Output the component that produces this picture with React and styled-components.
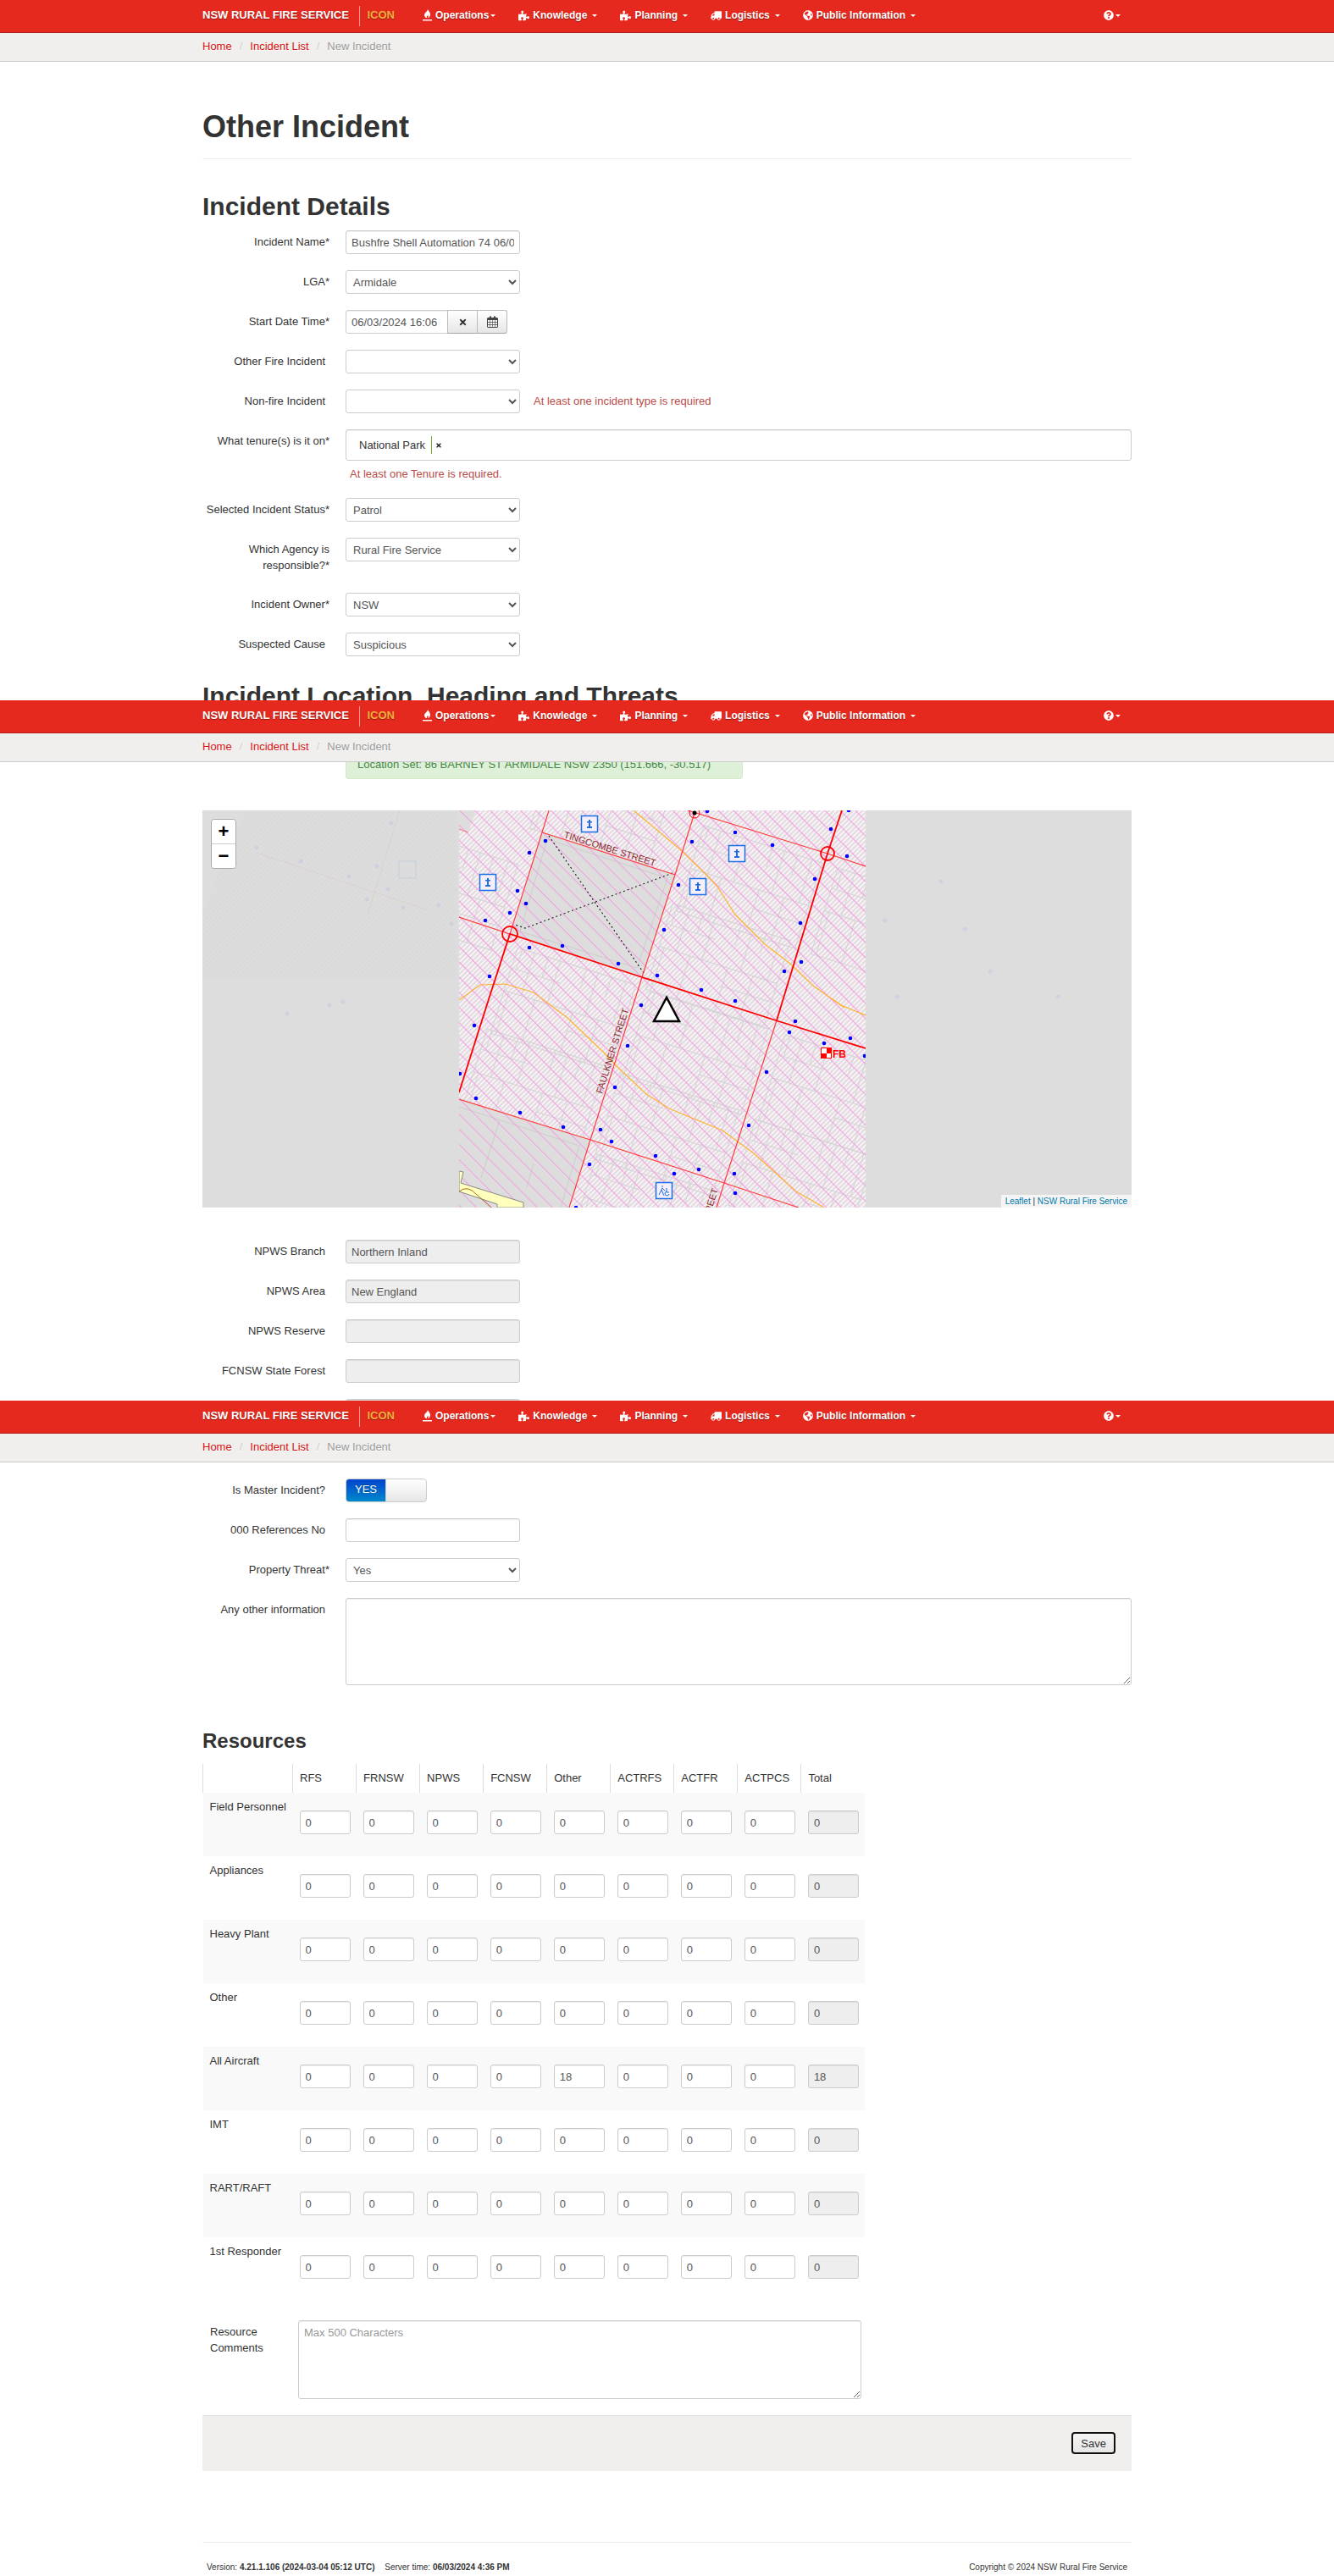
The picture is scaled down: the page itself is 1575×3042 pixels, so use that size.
import React from "react";
import styled, { createGlobalStyle, css } from "styled-components";
import { FaPuzzlePiece, FaTruck, FaGlobeAmericas, FaQuestionCircle, FaTimes } from "react-icons/fa";

const GlobalStyle = createGlobalStyle`
  *, *::before, *::after { box-sizing: border-box; }
  body {
    margin: 0;
    background: #fff;
    color: #333;
    font-family: "Liberation Sans", Arial, Helvetica, sans-serif;
    font-size: 13px;
    line-height: 19px;
  }
  input, select, textarea, button { font: inherit; margin: 0; }
`;

/* ---------- Shared layout ---------- */

const Container = styled.div`
  max-width: 1097px;
  margin: 0 auto;
`;

/* ---------- Header ---------- */

const NavBar = styled.nav`
  background: #e6291e;
  border-bottom: 1px solid #b01f17;
  color: #fff;
  font-weight: bold;
  text-shadow: 0 1px 1px rgba(0, 0, 0, 0.4);
`;

const NavInner = styled(Container)`
  display: flex;
  align-items: center;
  height: 38px;
  padding-right: 13px;
`;

const Brand = styled.a`
  display: flex;
  align-items: center;
  color: #fff;
  text-decoration: none;
  font-size: 13px;
  width: 227px;
  margin-right: 33px;
  white-space: nowrap;
`;

const BrandName = styled.span`
  padding-bottom: 2px;
  line-height: 22px;
`;

const BrandApp = styled(BrandName)`
  margin-left: auto;
  padding-left: 9px;
  border-left: 1px solid #f39b95;
  color: #f6b03c;
`;

const Menu = styled.ul`
  display: flex;
  flex: 1;
  align-items: center;
  gap: 27px;
  list-style: none;
  margin: 0;
  padding: 0 0 2px;
`;

const MenuItem = styled.li`
  ${(p) => p.$end && css`margin-left: auto;`}
`;

const MenuLink = styled.a`
  display: flex;
  align-items: center;
  gap: 4px;
  color: #fff;
  text-decoration: none;
  font-size: 12px;
  white-space: nowrap;
`;

const Caret = styled.span`
  border: 3px solid transparent;
  border-top-color: #fff;
  border-bottom: 0;
  margin-left: ${(p) => (p.$tight ? "-2px" : "2px")};
`;

const CrumbBar = styled.div`
  background: #f0efed;
  border-bottom: 1px solid #ccc;
`;

const Crumbs = styled.ol`
  display: flex;
  list-style: none;
  margin: 0;
  padding: 6px 0 8px;
  color: #999;
  text-shadow: 0 1px 0 #fff;
  li + li::before {
    content: "/";
    padding: 0 9px;
    color: #ccc;
  }
  a {
    color: #d40f0f;
    text-decoration: none;
  }
`;

const FireIcon = () => (
  <svg width="11" height="14" viewBox="0 0 11 14" fill="#fff" aria-hidden="true">
    <path d="M6 0c.4 1.7 3 3 3 6 0 2.300-1.200 3.800-3 4.300.9-1 1-2.200.2-3.300-.3.800-.8 1.100-1.400 1.300.2.800-.1 1.500.3 2C3.200 9.900 2 8.600 2 6.800 2 4.200 5.600 3 6 0z" />
    <path d="M0 12h11v1.500H0z" />
  </svg>
);

const menu = [
  { name: "Operations", icon: <FireIcon />, tight: true },
  { name: "Knowledge", icon: <FaPuzzlePiece size={13} /> },
  { name: "Planning", icon: <FaPuzzlePiece size={13} /> },
  { name: "Logistics", icon: <FaTruck size={13} style={{ transform: "scaleX(-1)" }} /> },
  { name: "Public Information", icon: <FaGlobeAmericas size={12} /> },
];

function Header() {
  return (
    <header>
      <NavBar>
        <NavInner>
          <Brand href="#home">
            <BrandName>NSW RURAL FIRE SERVICE</BrandName>
            <BrandApp>ICON</BrandApp>
          </Brand>
          <Menu>
            {menu.map((m) => (
              <MenuItem key={m.name}>
                <MenuLink href="#menu">
                  {m.icon}
                  {m.name}
                  <Caret $tight={m.tight} />
                </MenuLink>
              </MenuItem>
            ))}
            <MenuItem $end>
              <MenuLink href="#help" aria-label="Help">
                <FaQuestionCircle size={12} />
                <Caret $tight />
              </MenuLink>
            </MenuItem>
          </Menu>
        </NavInner>
      </NavBar>
      <CrumbBar>
        <Container>
          <Crumbs>
            <li><a href="#home">Home</a></li>
            <li><a href="#list">Incident List</a></li>
            <li>New Incident</li>
          </Crumbs>
        </Container>
      </CrumbBar>
    </header>
  );
}

/* ---------- Headings ---------- */

const PageTitle = styled.h1`
  margin: 57px 0 36px;
  padding-bottom: 17px;
  border-bottom: 1px solid #eee;
  font-size: 36px;
  line-height: 40px;
`;

const SectionTitle = styled.h2`
  margin: 0 0 8px;
  font-size: 30px;
  line-height: 40px;
`;

const SubTitle = styled.h3`
  margin: 46px 0 7px;
  font-size: 24px;
  line-height: 40px;
`;

const Cut = styled.div`
  overflow: hidden;
  height: ${(p) => p.$height}px;
  margin-top: ${(p) => p.$top || 0}px;
  ${(p) => p.$bottom && css`
    display: flex;
    align-items: flex-end;
  `}
`;

/* ---------- Form parts ---------- */

const FormRow = styled.div`
  display: grid;
  grid-template-columns: 150px minmax(0, 1fr);
  column-gap: 19px;
  align-items: start;
  margin-bottom: ${(p) => (p.$last ? 0 : 19)}px;
`;

const FormStart = styled.div`
  padding-top: 19px;
`;

const RowLabel = styled.label`
  display: block;
  min-height: 28px;
  padding: 4px ${(p) => (p.$required ? 0 : 5)}px 4px 0;
  text-align: right;
`;

const Controls = styled.div`
  display: flex;
  gap: 16px;
  flex-wrap: wrap;
`;

const field = css`
  border: 1px solid #ccc;
  border-radius: 3px;
  background: #fff;
  color: #555;
`;

const TextInput = styled.input`
  ${field}
  width: 206px;
  height: 28px;
  padding: 4px 6px;
  box-shadow: inset 0 1px 1px rgba(0, 0, 0, 0.075);
  &:disabled {
    background: #eee;
    color: #555;
  }
`;

const Select = styled.select`
  ${field}
  width: 206px;
  height: 28px;
  padding: 4px;
`;

const TextArea = styled.textarea`
  ${field}
  display: block;
  width: 100%;
  height: ${(p) => p.$height}px;
  padding: 4px 6px;
  box-shadow: inset 0 1px 1px rgba(0, 0, 0, 0.075);
  &::placeholder { color: #999; }
`;

const Message = styled.span`
  color: #b94a48;
  padding: ${(p) => (p.$below ? "6px 5px 0" : "4px 0")};
`;

const DateGroup = styled.div`
  display: flex;
  ${TextInput} {
    width: 121px;
    border-radius: 3px 0 0 3px;
  }
`;

const AddOn = styled.button`
  display: flex;
  align-items: center;
  justify-content: center;
  width: 36px;
  height: 28px;
  margin-left: -1px;
  padding: 0;
  border: 1px solid #bbb;
  border-bottom-color: #a2a2a2;
  background: linear-gradient(#fff, #e6e6e6);
  color: #333;
  &:last-child { border-radius: 0 3px 3px 0; }
`;

const TagBox = styled.div`
  ${field}
  display: flex;
  align-items: center;
  width: 100%;
  height: 37px;
  padding: 0 15px;
  color: #333;
  box-shadow: inset 0 1px 1px rgba(0, 0, 0, 0.075);
`;

const TagRemove = styled.button`
  display: flex;
  align-items: center;
  height: 21px;
  margin-left: 7px;
  padding: 0 0 0 4px;
  border: 0;
  border-left: 1px solid #6fae2c;
  background: none;
  color: #222;
`;

const Switch = styled.div`
  position: relative;
  display: flex;
  width: 96px;
  height: 28px;
  border: 1px solid #ccc;
  border-radius: 4px;
  overflow: hidden;
  background: linear-gradient(#fff, #e6e6e6);
  input {
    position: absolute;
    inset: 0;
    width: 100%;
    height: 100%;
    opacity: 0;
  }
`;

const SwitchOn = styled.span`
  width: 47px;
  padding-top: 2px;
  border-right: 1px solid #ccc;
  background: linear-gradient(#0044cc, #0088cc);
  color: #fff;
  text-align: center;
  text-shadow: 0 -1px 0 rgba(0, 0, 0, 0.25);
`;

const Alert = styled.div`
  width: 469px;
  margin-left: 169px;
  padding: 7px 13px;
  border: 1px solid #d6e9c6;
  border-radius: 3px;
  background: #dff0d8;
  color: #468847;
`;

const CalendarIcon = () => (
  <svg width="13" height="14" viewBox="0 0 13 14" aria-hidden="true">
    <path fill="#444" d="M1 2h2V.7C3 0 5 0 5 .7V2h3V.7C8 0 10 0 10 .7V2h2l1 1v10l-1 1H1l-1-1V3z" />
    <path fill="#fafafa" d="M1 5h2.300v2H1zM3.900 5h2.300v2H3.900zM6.800 5h2.300v2H6.800zM9.700 5H12v2H9.700zM1 7.700h2.300v2.300H1zM3.900 7.700h2.300v2.300H3.900zM6.800 7.700h2.300v2.300H6.800zM9.700 7.700H12v2.300H9.700zM1 10.700h2.300V13H1zM3.900 10.700h2.300V13H3.900zM6.800 10.700h2.300V13H6.800zM9.700 10.700H12V13H9.700z" />
  </svg>
);

function Row({ id, label, required, last, children }) {
  return (
    <FormRow $last={last}>
      <RowLabel htmlFor={id} $required={required}>
        {label}
        {required && "*"}
      </RowLabel>
      <Controls>{children}</Controls>
    </FormRow>
  );
}

function SelectRow({ id, label, required, value, last, children }) {
  return (
    <Row id={id} label={label} required={required} last={last}>
      <Select id={id} defaultValue={value}>
        <option>{value}</option>
      </Select>
      {children}
    </Row>
  );
}

/* ---------- Map ---------- */

const MapFrame = styled.div`
  position: relative;
  height: 469px;
  margin: 37px 0 38px;
  background: #ddd;
  overflow: hidden;
  svg { display: block; }
`;

const ZoomControl = styled.div`
  position: absolute;
  top: 10px;
  left: 10px;
  width: 30px;
  border: 1px solid #aaa;
  border-radius: 4px;
  overflow: hidden;
`;

const ZoomButton = styled.button`
  display: block;
  width: 28px;
  height: 28px;
  padding: 0;
  border: 0;
  background: #fff;
  color: #000;
  font-size: 22px;
  font-weight: bold;
  line-height: 28px;
  & + & {
    height: 29px;
    border-top: 1px solid #ccc;
  }
`;

const Attribution = styled.div`
  position: absolute;
  right: 0;
  bottom: 0;
  padding: 0 5px;
  background: rgba(255, 255, 255, 0.7);
  font-size: 10px;
  line-height: 15px;
  a {
    color: #0078a8;
    text-decoration: none;
  }
`;

const hydrants = [
  [102, 36], [83, 50], [69, 95], [79, 110], [60, 121], [31, 130], [83, 162], [122, 160], [188, 181], [36, 196],
  [234, 195], [286, 212], [326, 225], [215, 230], [242, 141], [259, 88], [275, 37], [293, 1], [326, 26], [370, 41],
  [439, 22], [458, 54], [460, 0], [420, 81], [403, 133], [404, 179], [384, 190], [18, 254], [1, 311], [20, 340],
  [72, 357], [123, 374], [167, 377], [180, 391], [154, 418], [232, 408], [283, 424], [254, 429], [325, 429],
  [326, 452], [342, 372], [363, 309], [390, 262], [397, 249], [431, 275], [462, 269], [479, 290], [199, 278],
  [184, 327], [138, 469],
];

const faintDots = [
  [223, 15], [64, 44], [116, 60], [206, 66], [173, 78], [219, 93], [194, 105], [237, 115], [279, 112], [294, 134],
  [150, 230], [166, 226], [100, 240], [806, 130], [872, 84], [900, 140], [930, 190], [1010, 220], [820, 220],
];

const monuments = [[154, 16], [34, 85], [328, 51], [282, 90]];

const lotOffsets = [14, 29, 46, 61, 93, 108, 124, 142];

function Lots({ x, y }) {
  return (
    <g transform={`translate(${x} ${y}) rotate(17.5)`} fill="none" stroke="#d3d3d6" strokeWidth="1">
      <path d="M8 8h146v106H8zM8 61h146M8 33h60M92 84h62" />
      {lotOffsets.map((o, i) => (
        <path key={o} d={i % 2 ? `M${o} 8v53` : `M${o} 61v53M${o} 8v25`} />
      ))}
    </g>
  );
}

function MapDrawing() {
  return (
    <svg width="100%" height="469" viewBox="0 0 1097 469" preserveAspectRatio="xMidYMid slice" role="img" aria-label="Incident map">
      <defs>
        <pattern id="hatch" width="4" height="4" patternUnits="userSpaceOnUse" patternTransform="rotate(45)">
          <rect width="4" height="4" fill="#fdf0f8" />
          <rect width="1.900" height="4" fill="#dcdcdc" />
        </pattern>
        <pattern id="pink" width="12.700" height="12.700" patternUnits="userSpaceOnUse" patternTransform="rotate(-45)">
          <rect width="0.900" height="12.700" fill="#f994e4" />
        </pattern>
        <pattern id="faint" width="4" height="4" patternUnits="userSpaceOnUse" patternTransform="rotate(45)">
          <rect width="2" height="4" fill="#dadada" />
        </pattern>
        <clipPath id="tile"><rect width="480" height="469" /></clipPath>
      </defs>

      <path fill="url(#faint)" d="M50 0h250v200H0V120z" />
      <g opacity="0.05">
        <path d="M64 50l203 68M233 0l-38 123" stroke="#f00" fill="none" />
        <rect x="232" y="60" width="20" height="20" fill="none" stroke="#06f" strokeWidth="2" />
        {faintDots.map(([x, y]) => <circle key={`${x}-${y}`} cx={x} cy={y} r="2.500" fill="#00f" />)}
      </g>

      <g transform="translate(303 0)" clipPath="url(#tile)">
        <rect width="480" height="469" fill="url(#hatch)" />
        <Lots x={110} y={-90} />
        <Lots x={284} y={8} />
        <Lots x={442} y={58} />
        <Lots x={-75} y={10} />
        <Lots x={247} y={100} />
        <Lots x={64} y={152} />
        <Lots x={28} y={248} />
        <Lots x={220} y={204} />
        <Lots x={186} y={300} />
        <Lots x={380} y={255} />
        <Lots x={345} y={355} />
        <Lots x={158} y={396} />
        <g fill="#ddd">
          <path d="M98 26L255 76 216 197 61 146z" />
          <path d="M0 341L155 389 130 469H0z" />
          <path d="M0 0H20L11 26 0 22z" />
        </g>
        <path d="M104 34L246 80 210 186 72 143zM0 350L142 396 120 469M48 366L26 434M88 417L80 445" fill="none" stroke="#ccc" />
        <rect width="480" height="469" fill="url(#pink)" />
        <path d="M0 426L5 427 2 440 76 463V469H45V465L0 450z" fill="#ffffbe" stroke="#888" />
        <path d="M0 450Q10 442 20 453L38 469" fill="none" stroke="#a87020" />

        <g fill="none" stroke="#ffb32c" strokeWidth="1.200">
          <path d="M206 0L261 46 290 74 305 90 326 123 361 158 391 181 418 207 455 233" />
          <path d="M441 223L451 230 480 242" />
          <path d="M0 224L25 206 55 205 88 215 128 245 171 286 185 301 221 335 248 352 311 378 348 405 398 450 431 469" />
        </g>
        <g fill="none" stroke="#222" strokeWidth="1.200" strokeDasharray="2 3">
          <path d="M106 30L218 192" />
          <path d="M252 74L78 139 66 135" />
        </g>
        <g fill="none" stroke="#ff3c3c" strokeWidth="1.200">
          <path d="M0 126L60 146 98 26 106 0M98 26L255 76" />
          <path d="M278 3L255 76 216 197 155 389 130 469" />
          <path d="M270 0L435 51 480 66" />
          <path d="M375 248L313 440 304 469" />
          <path d="M0 341L155 389 313 440 401 469" />
          <path d="M0 22L11 26" opacity="0.5" />
        </g>
        <g fill="none" stroke="#f00" strokeWidth="1.800">
          <path d="M480 281L374 248 216 197 60 146 35 223 0 333" />
          <path d="M452 0L435 51 375 248" />
          <circle cx="60" cy="146" r="9" />
          <circle cx="435" cy="51" r="8" />
          <circle cx="278" cy="3" r="6" strokeWidth="1" />
        </g>
        <circle cx="278" cy="3" r="2.500" />
        {hydrants.map(([x, y]) => <circle key={`${x}-${y}`} cx={x} cy={y} r="2.300" fill="#00f" />)}

        {monuments.map(([x, y]) => (
          <g key={`${x}-${y}`} transform={`translate(${x} ${y})`}>
            <rect x="-9.500" y="-9.500" width="19" height="19" fill="#f6eef8" stroke="#1a6fe8" strokeWidth="1.500" />
            <path d="M-1-5h2v2h2v1.500H1V3h2v2h-6V3h2v-4.500h-2V-3h2z" fill="#1a6fe8" />
          </g>
        ))}
        <g transform="translate(242 449)" fill="none" stroke="#1a6fe8">
          <rect x="-9.500" y="-9.500" width="19" height="19" fill="#f6eef8" strokeWidth="1.500" />
          <path d="M-2-6v2M-2-3L-6 5M-3-1L0 6M-2-3L1 0M3-3v5h3M3 1a2.500 2.500 0 1 0 3 3" />
        </g>

        <path d="M245 221L230 249H260z" fill="#fff" stroke="#000" strokeWidth="2.500" />
        <g fill="#f00">
          <rect x="427.500" y="280.500" width="12" height="12" fill="#fff" stroke="#f00" />
          <path d="M434 281h6v6h-6zM428 287h6v6h-6z" />
          <text x="441" y="292" fontSize="12" fontWeight="bold">FB</text>
        </g>
        <g fill="#8c2a2a" fontSize="11">
          <text transform="translate(123 32) rotate(17.5)">TINGCOMBE STREET</text>
          <text transform="translate(169 335) rotate(-72.500)">FAULKNER STREET</text>
          <text transform="translate(293 489) rotate(-72.500)">STREET</text>
        </g>
      </g>
    </svg>
  );
}

function IncidentMap() {
  return (
    <MapFrame>
      <MapDrawing />
      <ZoomControl>
        <ZoomButton type="button" aria-label="Zoom in">+</ZoomButton>
        <ZoomButton type="button" aria-label="Zoom out">−</ZoomButton>
      </ZoomControl>
      <Attribution>
        <a href="#leaflet">Leaflet</a> | <a href="#rfs">NSW Rural Fire Service</a>
      </Attribution>
    </MapFrame>
  );
}

/* ---------- Resources ---------- */

const Table = styled.table`
  width: 782px;
  border-collapse: collapse;
  table-layout: fixed;
`;

const HeadCell = styled.th`
  width: ${(p) => (p.$first ? "106px" : "auto")};
  padding: 7px 0 8px 8px;
  border-left: 1px solid #ddd;
  font-weight: normal;
  text-align: left;
`;

const BodyRow = styled.tr`
  height: 75px;
  vertical-align: top;
  &:nth-child(odd) { background: #f9f9f9; }
`;

const RowHead = styled.th`
  padding: 7px 0 0 8px;
  font-weight: normal;
  text-align: left;
  white-space: nowrap;
`;

const Cell = styled.td`
  padding: 21px 0 0 8px;
  ${TextInput} {
    display: block;
    width: 60px;
  }
`;

const CommentRow = styled.div`
  display: grid;
  grid-template-columns: 113px minmax(0, 1fr);
  max-width: 778px;
  margin: 23px 0 19px;
  label { padding: 4px 20px 0 9px; }
`;

const agencies = ["RFS", "FRNSW", "NPWS", "FCNSW", "Other", "ACTRFS", "ACTFR", "ACTPCS", "Total"];
const resources = [
  { name: "Field Personnel" },
  { name: "Appliances" },
  { name: "Heavy Plant" },
  { name: "Other" },
  { name: "All Aircraft", counts: { Other: 18, Total: 18 } },
  { name: "IMT" },
  { name: "RART/RAFT" },
  { name: "1st Responder" },
];

function ResourceTable() {
  return (
    <Table>
      <thead>
        <tr>
          <HeadCell $first aria-label="Resource" />
          {agencies.map((a) => <HeadCell key={a} scope="col">{a}</HeadCell>)}
        </tr>
      </thead>
      <tbody>
        {resources.map((r) => (
          <BodyRow key={r.name}>
            <RowHead scope="row">{r.name}</RowHead>
            {agencies.map((a) => (
              <Cell key={a}>
                <TextInput
                  aria-label={`${r.name} ${a}`}
                  defaultValue={r.counts?.[a] ?? 0}
                  disabled={a === "Total"}
                />
              </Cell>
            ))}
          </BodyRow>
        ))}
      </tbody>
    </Table>
  );
}

/* ---------- Footer ---------- */

const Actions = styled.div`
  display: flex;
  justify-content: flex-end;
  padding: 19px 19px 20px;
  border-top: 1px solid #e5e5e5;
  background: #f0efed;
`;

const SaveButton = styled.button`
  height: 26px;
  padding: 0 9px;
  border: 2px solid #101010;
  border-radius: 4px;
  background: linear-gradient(#f4f4f4, #e6e6e6);
  color: #333;
  line-height: 19px;
`;

const Footer = styled.footer`
  display: flex;
  justify-content: space-between;
  margin-top: 84px;
  padding: 20px 5px 0;
  border-top: 1px solid #eee;
  font-size: 10px;
  line-height: 18px;
  strong { margin-right: 9px; }
`;

/* ---------- Page ---------- */

export default function App() {
  return (
    <>
      <GlobalStyle />
      <section>
        <Header />
        <Container>
          <PageTitle>Other Incident</PageTitle>
          <SectionTitle>Incident Details</SectionTitle>
          <Row id="name" label="Incident Name" required>
            <TextInput id="name" defaultValue="Bushfre Shell Automation 74 06/03/2024" />
          </Row>
          <SelectRow id="lga" label="LGA" required value="Armidale" />
          <Row id="start" label="Start Date Time" required>
            <DateGroup>
              <TextInput id="start" defaultValue="06/03/2024 16:06" />
              <AddOn type="button" aria-label="Clear date"><FaTimes size={11} /></AddOn>
              <AddOn type="button" aria-label="Pick date"><CalendarIcon /></AddOn>
            </DateGroup>
          </Row>
          <SelectRow id="fire" label="Other Fire Incident" value="" />
          <SelectRow id="nonfire" label="Non-fire Incident" value="">
            <Message>At least one incident type is required</Message>
          </SelectRow>
          <FormRow>
            <RowLabel as="div" $required>What tenure(s) is it on*</RowLabel>
            <div>
              <TagBox>
                National Park
                <TagRemove type="button" aria-label="Remove National Park"><FaTimes size={8} /></TagRemove>
              </TagBox>
              <Message as="div" $below>At least one Tenure is required.</Message>
            </div>
          </FormRow>
          <SelectRow id="status" label="Selected Incident Status" required value="Patrol" />
          <SelectRow id="agency" label="Which Agency is responsible?" required value="Rural Fire Service" />
          <SelectRow id="owner" label="Incident Owner" required value="NSW" />
          <SelectRow id="cause" label="Suspected Cause" value="Suspicious" last />
          <Cut $top={27} $height={25}>
            <SectionTitle>Incident Location, Heading and Threats</SectionTitle>
          </Cut>
        </Container>
      </section>

      <section>
        <Header />
        <Container>
          <Cut $height={20} $bottom>
            <Alert>Location Set: 86 BARNEY ST ARMIDALE NSW 2350 (151.666, -30.517)</Alert>
          </Cut>
          <IncidentMap />
          <Row id="branch" label="NPWS Branch">
            <TextInput id="branch" defaultValue="Northern Inland" disabled />
          </Row>
          <Row id="area" label="NPWS Area">
            <TextInput id="area" defaultValue="New England" disabled />
          </Row>
          <Row id="reserve" label="NPWS Reserve">
            <TextInput id="reserve" disabled />
          </Row>
          <Row id="forest" label="FCNSW State Forest">
            <TextInput id="forest" disabled />
          </Row>
          <Cut $height={2}>
            <Row id="region">
              <TextInput id="region" aria-label="Region" disabled />
            </Row>
          </Cut>
        </Container>
      </section>

      <section>
        <Header />
        <Container>
          <FormStart>
            <Row id="master" label="Is Master Incident?">
              <Switch>
                <SwitchOn>YES</SwitchOn>
                <input id="master" type="checkbox" defaultChecked />
              </Switch>
            </Row>
            <Row id="refs" label="000 References No">
              <TextInput id="refs" />
            </Row>
            <SelectRow id="threat" label="Property Threat" required value="Yes" />
            <Row id="info" label="Any other information" last>
              <TextArea id="info" $height={103} />
            </Row>
          </FormStart>
          <SubTitle>Resources</SubTitle>
          <ResourceTable />
          <CommentRow>
            <label htmlFor="comments">Resource Comments</label>
            <div>
              <TextArea id="comments" placeholder="Max 500 Characters" $height={93} />
            </div>
          </CommentRow>
          <Actions>
            <SaveButton type="submit">Save</SaveButton>
          </Actions>
          <Footer>
            <span>
              Version: <strong>4.21.1.106 (2024-03-04 05:12 UTC)</strong> Server time: <strong>06/03/2024 4:36 PM</strong>
            </span>
            <span>Copyright © 2024 NSW Rural Fire Service</span>
          </Footer>
        </Container>
      </section>
    </>
  );
}
